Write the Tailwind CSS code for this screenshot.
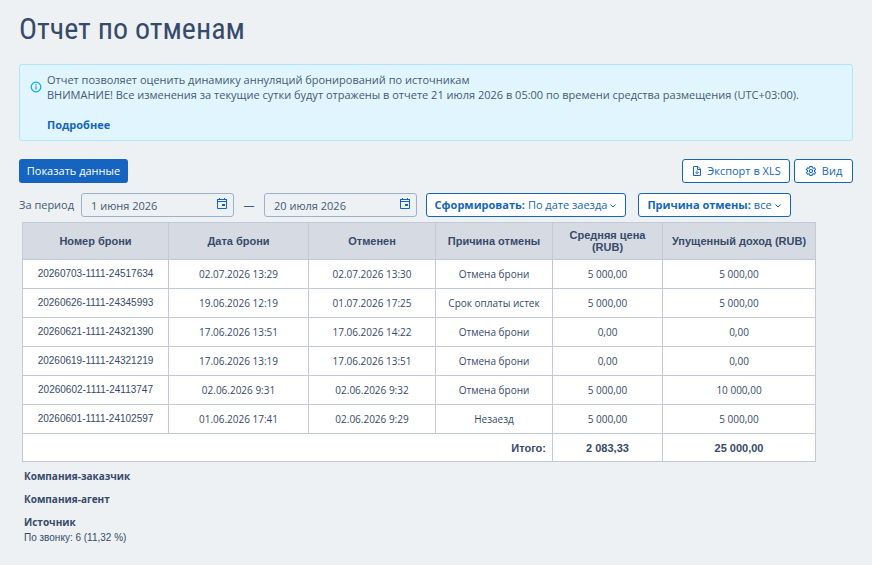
<!DOCTYPE html>
<html lang="ru">
<head>
  <meta charset="UTF-8" />
  <meta name="viewport" content="width=device-width, initial-scale=1.0"/>
  <title>Отчет по отменам</title>
  <script src="https://cdn.jsdelivr.net/npm/@tailwindcss/browser@4"></script>
</head>
<body class="bg-[#edf1f4] min-h-screen px-[19px] pt-3 pb-4 font-['Open_Sans',sans-serif] text-[11px] text-[#455a75]">

  <h1 class="font-['Roboto_Condensed',Roboto,sans-serif] text-[30px] leading-[34px] text-[#364a6a]">Отчет по отменам</h1>

  <!-- Info -->
  <div class="mt-[18px] flex gap-[5px] rounded-[3px] border border-[#b0e5fb] bg-[#e1f5fe] px-2.5 pt-[7px] pb-2 leading-[15px]">
    <svg class="mt-[9px] size-3 shrink-0" viewBox="0 0 12 12" fill="none" stroke="#03a9f4" stroke-width="1.2">
      <circle cx="6" cy="6" r="4.8"/>
      <path d="M6 5.3v3.2M6 3.3v1.1"/>
    </svg>
    <div>
      <p>Отчет позволяет оценить динамику аннуляций бронирований по источникам</p>
      <p>ВНИМАНИЕ! Все изменения за текущие сутки будут отражены в отчете 21 июля 2026 в 05:00 по времени средства размещения (UTC+03:00).</p>
      <a href="#" class="mt-[15px] block font-bold text-[#1565c0]">Подробнее</a>
    </div>
  </div>

  <!-- Actions -->
  <div class="mt-[18px] flex gap-1">
    <button class="mr-auto h-6 w-[109px] rounded-[3px] bg-[#1565c0] text-white">Показать данные</button>
    <button class="flex h-6 w-[108px] items-center justify-center gap-1 rounded-[3px] border border-[#1565c0] bg-white text-[#1565c0]">
      <svg class="size-3" viewBox="0 0 12 12" fill="none" stroke="currentColor">
        <path d="M2.500 1.500h4.500l2.500 2.500v6.500h-7zM6.500 1.500v3h3M6 5.500v3M4.500 7.200l1.500 1.500 1.500-1.500"/>
      </svg>
      Экспорт в XLS
    </button>
    <button class="flex h-6 w-[59px] items-center justify-center gap-[5px] rounded-[3px] border border-[#1565c0] bg-white text-[#1565c0]">
      <svg class="size-3" viewBox="-0.5 -0.5 13 13" fill="none" stroke="currentColor" stroke-width="1.1">
        <path d="M4.900 1h2.200l.3 1.400 1 .6 1.400-.4 1.100 1.900-1.100 1v1.100l1.100 1-1.100 1.900-1.400-.4-1 .6-.3 1.300h-2.200l-.3-1.300-1-.6-1.400.4-1.100-1.900 1.100-1v-1.100l-1.100-1 1.100-1.900 1.400.4 1-.6z"/>
        <circle cx="6" cy="6" r="1.700"/>
      </svg>
      Вид
    </button>
  </div>

  <!-- Filters -->
  <div class="mt-[10px] flex items-center">
    <label for="dateFrom" class="w-[62px] whitespace-nowrap">За период</label>
    <div class="relative w-[153px]">
      <input id="dateFrom" type="text" value="1 июня 2026" class="block h-6 w-full rounded-[3px] border border-[#9fb0ca] pl-[9px] pr-7"/>
      <svg class="absolute right-1.5 top-[5px] size-3" viewBox="0 0 12 12" fill="none" stroke="#1565c0">
        <path d="M1.500 2v8.500h9v-8.500M3.500 0v2M8.500 0v2"/>
        <path fill="#1565c0" stroke="none" d="M1 1h10v1h-10zM1 3h10v1h-10zM6 6h3v2h-3z"/>
      </svg>
    </div>
    <label for="dateTo" class="w-[30px] text-center">—</label>
    <div class="relative w-[153px]">
      <input id="dateTo" type="text" value="20 июля 2026" class="block h-6 w-full rounded-[3px] border border-[#9fb0ca] pl-[9px] pr-7"/>
      <svg class="absolute right-1.5 top-[5px] size-3" viewBox="0 0 12 12" fill="none" stroke="#1565c0">
        <path d="M1.500 2v8.500h9v-8.500M3.500 0v2M8.500 0v2"/>
        <path fill="#1565c0" stroke="none" d="M1 1h10v1h-10zM1 3h10v1h-10zM6 6h3v2h-3z"/>
      </svg>
    </div>
    <div class="ml-[9px] flex h-6 w-[200px] items-center justify-center rounded-[3px] border border-[#1565c0] bg-white whitespace-nowrap text-[#1565c0]">
      <label for="groupBy" class="font-bold">Сформировать:</label>
      <select id="groupBy" class="ml-[3px] appearance-none field-sizing-content">
        <option>По дате заезда</option>
      </select>
      <svg class="ml-0.5 mt-0.5 size-2" viewBox="0 0 8 8" fill="none" stroke="currentColor"><path d="M1.500 2.500l2.500 2.500 2.500-2.500"/></svg>
    </div>
    <div class="ml-3 flex h-6 w-[153px] items-center justify-center rounded-[3px] border border-[#1565c0] bg-white whitespace-nowrap text-[#1565c0]">
      <label for="reason" class="font-bold">Причина отмены:</label>
      <select id="reason" class="ml-[3px] appearance-none field-sizing-content">
        <option>все</option>
      </select>
      <svg class="ml-0.5 mt-0.5 size-2" viewBox="0 0 8 8" fill="none" stroke="currentColor"><path d="M1.500 2.500l2.500 2.500 2.500-2.500"/></svg>
    </div>
  </div>

  <!-- Report -->
  <table class="ml-[3px] mt-[5px] border-collapse bg-white text-center text-[10px] leading-3 text-[#364a6a] [&_td]:border [&_td]:border-[#c3c9d6] [&_th]:border [&_th]:border-[#c3c9d6]">
    <thead class="bg-[#d6dbe3] font-['Liberation_Sans',Arial,sans-serif] text-[11px]">
      <tr class="h-[37px]">
        <th class="w-[146px]">Номер брони</th>
        <th class="w-[140px]">Дата брони</th>
        <th class="w-[127px]">Отменен</th>
        <th class="w-[117px]">Причина отмены</th>
        <th class="w-[110px]">Средняя цена<br/>(RUB)</th>
        <th class="w-[153px]">Упущенный доход (RUB)</th>
      </tr>
    </thead>
    <tbody id="rows"></tbody>
    <tfoot class="font-['Liberation_Sans',Arial,sans-serif] text-[11px] font-bold">
      <tr class="h-7">
        <td colspan="4" class="pr-1.5 text-right">Итого:</td>
        <td>2 083,33</td>
        <td>25 000,00</td>
      </tr>
    </tfoot>
  </table>

  <!-- Summary -->
  <div class="ml-[5px] mt-1.5 text-[10px] leading-4 text-[#364a6a]">
    <h2 class="font-bold">Компания-заказчик</h2>
    <h2 class="mt-[7px] font-bold">Компания-агент</h2>
    <h2 class="mt-[7px] font-bold">Источник</h2>
    <p class="font-['Liberation_Sans',Arial,sans-serif]">По звонку: 6 (11,32 %)</p>
  </div>

  <script>
    const bookings = [
      ['20260703-1111-24517634', '02.07.2026 13:29', '02.07.2026 13:30', 'Отмена брони', '5 000,00', '5 000,00'],
      ['20260626-1111-24345993', '19.06.2026 12:19', '01.07.2026 17:25', 'Срок оплаты истек', '5 000,00', '5 000,00'],
      ['20260621-1111-24321390', '17.06.2026 13:51', '17.06.2026 14:22', 'Отмена брони', '0,00', '0,00'],
      ['20260619-1111-24321219', '17.06.2026 13:19', '17.06.2026 13:51', 'Отмена брони', '0,00', '0,00'],
      ['20260602-1111-24113747', '02.06.2026 9:31', '02.06.2026 9:32', 'Отмена брони', '5 000,00', '10 000,00'],
      ['20260601-1111-24102597', '01.06.2026 17:41', '02.06.2026 9:29', 'Незаезд', '5 000,00', '5 000,00']
    ];

    document.getElementById('rows').innerHTML = bookings.map(([number, ...cells]) => `
      <tr class="h-[29px]">
        <td class="font-['Liberation_Sans',Arial,sans-serif]">${number}</td>
        ${cells.map(c => `<td>${c}</td>`).join('')}
      </tr>`).join('');
  </script>

</body>
</html>
